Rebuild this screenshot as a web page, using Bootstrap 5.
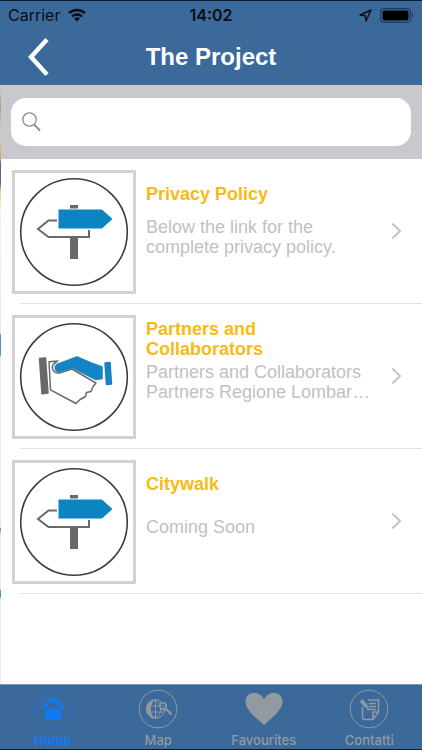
<!DOCTYPE html>
<html lang="en">
<head>
<meta charset="utf-8">
<meta name="viewport" content="width=device-width, initial-scale=1">
<title>The Project</title>
<link href="https://cdn.jsdelivr.net/npm/bootstrap@5.3.0/dist/css/bootstrap.min.css" rel="stylesheet">
<style>
  :root { --bar: #3b6a9a; --gold: #f9ba14; --muted: #c1c1c3; }
  body { font-family: "Liberation Sans", Arial, sans-serif; }
  .app-header { background: var(--bar); border-top: 1px solid #0b1a33; }
  .status-bar { font-family: Inter, sans-serif; font-size: 16px; line-height: 28px; color: #0a0d14; }
  .status-time { font-weight: 600; }
  .title-bar { height: 56px; }
  .page-title { font-size: 24px; line-height: 56px; font-weight: 700; }
  .back-btn { width: 78px; height: 56px; line-height: 0; }
  .app-main {
    background: linear-gradient(#d9d3c4 0, #a99f84 20px, #d9d3c4 50px, #c9a84a 74px, #50688f 78px, #50688f 98px,
      #e6cf8a 106px, #f3f3f3 124px, #e8e8e8 248px, #4b96bd 250px, #4b96bd 270px, #ececec 272px, #ececec 442px,
      #4b96bd 444px, #ececec 450px, #ececec 504px, #4b96bd 506px, #4b96bd 512px, #ececec 514px) 0 0 / 1px 100% no-repeat #fff;
  }
  .search-panel { background: #c9c8cf; padding: 13px 11px 13px 10px; margin-left: 1px; }
  .search-box { height: 48px; border-radius: 15px; padding: 0 11px; }
  .search-box input { font-size: 18px; }
  .entry { height: 145px; padding: 11px 12px 0 12px; color: inherit; }
  .entry::after { content: ""; position: absolute; left: 20px; right: 0; bottom: 0; height: 1px; background: #e3e3e4; }
  .thumb { width: 124px; height: 124px; border: 3px solid #d2d2d2; }
  .entry-text { margin-left: 10px; margin-top: 4px; }
  .entry-title, .entry-desc { height: 40px; font-size: 18px; line-height: 20px; }
  .entry-title { color: var(--gold); font-weight: 700; max-width: 150px; }
  .entry-desc { color: var(--muted); margin-top: 3px; }
  .chevron { margin: 52px 8px 0 16px; }
  .tab-bar { background: var(--bar); border-top: 1px solid #7f9bb8; border-bottom: 1px solid #0b1a33; height: 66px; }
  .tab-item { font-family: Inter, sans-serif; font-size: 13px; line-height: 16px; font-weight: 500; color: #9299a1; padding-top: 4px; }
  .tab-item.current { color: #0a7bff; font-weight: 600; }
  .tab-item svg { margin-bottom: 3px; }
</style>
<script src="https://cdn.jsdelivr.net/npm/bootstrap@5.3.0/dist/js/bootstrap.bundle.min.js" defer></script>
</head>
<body class="d-flex flex-column min-vh-100 bg-white">
<svg class="d-none" aria-hidden="true">
  <symbol id="signpost" viewBox="0 0 118 118">
    <circle cx="59" cy="59" r="53.3" fill="none" stroke="#3c3c3e" stroke-width="1.6"/>
    <path d="M55 32h8v54h-8z" fill="#68696b"/>
    <path d="M74 43v21H33l-10-8 10-9h12z" fill="#fff"/>
    <path d="M42 47.500H33.500L23 56l10.500 8H74V57" fill="none" stroke="#68696b" stroke-width="2"/>
    <path d="M43 36h44l11 10-11 10H43z" fill="#0b84c1" stroke="#fff" stroke-width="1"/>
  </symbol>
  <symbol id="handshake" viewBox="0 0 118 118">
    <circle cx="59" cy="59" r="53.300" fill="none" stroke="#3c3c3e" stroke-width="1.6"/>
    <path d="M24.500 40.500l6-.5 2.500 35-6 .8z" fill="#68696b" stroke="#68696b" stroke-width="1.500" stroke-linejoin="round"/>
    <path d="M43 43l-9 .8 1.500 28L61 85.500l4-4 5.500-3 1-4 4.500-1 2-5 3-3.500-24-14-12.500 4c-8 .5-9.500-8-3-11z" fill="#fff" stroke="#68696b" stroke-width="1.500" stroke-linejoin="round"/>
    <path d="M42 46.500l20-7.500 14 6 11 4v11.500l-6 1L57.500 49.500 44 53.500c-4 .5-5-5-2-7z" fill="#1683c4" stroke="#1683c4" stroke-width="1.500" stroke-linejoin="round"/>
    <path d="M90 45l5-.5 1.500 21.500-5 .5z" fill="#1683c4" stroke="#1683c4" stroke-width="1.500" stroke-linejoin="round"/>
  </symbol>
  <symbol id="next" viewBox="0 0 11 18"><path d="M1.300 1.500L9 9l-7.700 7.500" fill="none" stroke="#c4c4c8" stroke-width="2"/></symbol>
</svg>

<header class="app-header">
  <div class="status-bar row g-0 px-2">
    <div class="col d-flex align-items-center">
      <span>Carrier</span>
      <svg class="ms-2" width="18" height="14" viewBox="0 0 18 14" aria-label="Wi-Fi"><g fill="none" stroke="#0a0d14" stroke-width="2.400"><path d="M1 5.200a11.500 11.500 0 0 1 16 0"/><path d="M4 8.500a7.200 7.200 0 0 1 10 0"/></g><path d="M9 13.500l-3-3a4.200 4.200 0 0 1 6 0z" fill="#0a0d14"/></svg>
    </div>
    <div class="col-auto status-time">14:02</div>
    <div class="col d-flex align-items-center justify-content-end">
      <svg class="me-2" width="13" height="13" viewBox="0 0 13 13" aria-label="Location"><path d="M12 1L1 6l5.300.7L7 12z" fill="none" stroke="#0a0d14" stroke-width="1.400" stroke-linejoin="round"/></svg>
      <svg width="34" height="15" viewBox="0 0 34 15" aria-label="Battery"><rect x=".6" y=".6" width="29.800" height="13.800" rx="3.500" fill="none" stroke="#1f3c60" stroke-width="1.200"/><rect x="2.500" y="2.500" width="26" height="10" rx="1.800" fill="#000"/><path d="M31.800 5v5c2-.8 2-4.200 0-5z" fill="#1f3c60"/></svg>
    </div>
  </div>
  <div class="title-bar row g-0 text-white">
    <div class="col"><button type="button" class="back-btn btn p-0 border-0" aria-label="Back"><svg width="22" height="38" viewBox="0 0 22 38"><path d="M19 1.500L3 19l16 17.500" fill="none" stroke="#fff" stroke-width="4.400"/></svg></button></div>
    <h1 class="page-title col-auto m-0">The Project</h1>
    <div class="col"></div>
  </div>
</header>

<main class="app-main flex-grow-1">
  <form class="search-panel" role="search">
    <div class="search-box bg-white d-flex align-items-center">
      <label for="q" class="lh-1"><svg width="19" height="20" viewBox="0 0 19 20" role="img" aria-label="Search"><g fill="none" stroke="#8b8b90"><circle cx="7.500" cy="7.500" r="6.700" stroke-width="1.300"/><path d="M12.200 12.600l5.800 6" stroke-width="2"/></g></svg></label>
      <input id="q" type="search" class="form-control border-0 shadow-none bg-transparent">
    </div>
  </form>
  <nav aria-label="Project pages">
    <a href="#privacy" class="entry d-flex align-items-start position-relative text-decoration-none">
      <span class="thumb flex-shrink-0 d-block bg-white"><svg class="d-block" width="118" height="118" aria-hidden="true"><use href="#signpost"/></svg></span>
      <span class="entry-text flex-grow-1 overflow-hidden">
        <span class="entry-title d-flex align-items-center">Privacy Policy</span>
        <span class="entry-desc d-flex flex-column justify-content-center"><span>Below the link for the</span><span>complete privacy policy.</span></span>
      </span>
      <svg class="chevron flex-shrink-0" width="11" height="18" aria-hidden="true"><use href="#next"/></svg>
    </a>
    <a href="#partners" class="entry d-flex align-items-start position-relative text-decoration-none">
      <span class="thumb flex-shrink-0 d-block bg-white"><svg class="d-block" width="118" height="118" aria-hidden="true"><use href="#handshake"/></svg></span>
      <span class="entry-text flex-grow-1 overflow-hidden">
        <span class="entry-title d-flex align-items-center">Partners and Collaborators</span>
        <span class="entry-desc d-flex flex-column justify-content-center"><span>Partners and Collaborators</span><span class="text-truncate">Partners Regione Lombardia</span></span>
      </span>
      <svg class="chevron flex-shrink-0" width="11" height="18" aria-hidden="true"><use href="#next"/></svg>
    </a>
    <a href="#citywalk" class="entry d-flex align-items-start position-relative text-decoration-none">
      <span class="thumb flex-shrink-0 d-block bg-white"><svg class="d-block" width="118" height="118" aria-hidden="true"><use href="#signpost"/></svg></span>
      <span class="entry-text flex-grow-1 overflow-hidden">
        <span class="entry-title d-flex align-items-center">Citywalk</span>
        <span class="entry-desc d-flex flex-column justify-content-center"><span>Coming Soon</span></span>
      </span>
      <svg class="chevron flex-shrink-0" width="11" height="18" aria-hidden="true"><use href="#next"/></svg>
    </a>
  </nav>
</main>

<nav class="tab-bar row g-0 text-center sticky-bottom" aria-label="Sections">
  <a href="#home" class="tab-item current col text-decoration-none d-flex flex-column align-items-center" aria-current="page">
    <svg width="40" height="40" viewBox="0 0 40 40"><circle cx="20" cy="20" r="18.800" fill="none" stroke="#1470d8"/><path d="M10 19.500l3.500-5L20 9.500l6.500 5 3.500 5" fill="none" stroke="#0a7bff" stroke-width="3"/><path d="M12 20.500h3l5-3 5 3h3V31H12z" fill="#0a7bff"/><path d="M13 24h14M13 28h14M17 21v3M23 21v3M20 24v4M16 28v3M24 28v3" stroke="#2670c4" stroke-width=".7"/></svg>Home</a>
  <a href="#map" class="tab-item col text-decoration-none d-flex flex-column align-items-center">
    <svg width="40" height="40" viewBox="0 0 40 40" fill="none" stroke="#9299a1"><circle cx="20" cy="20" r="18.800"/><circle cx="17.500" cy="20" r="9.300"/><path d="M17.500 10.700v18.600M8.500 17h17M8.500 23h17M17.500 10.700c-7 4-7 14.600 0 18.600M17.500 10.700c7 4 7 14.600 0 18.600"/><path d="M15 11c-8 3-8 15 0 18-4-5-4-13 0-18z" fill="#9299a1"/><circle cx="25" cy="17" r="3.200" fill="#3b6a9a" stroke-width="1.600"/><circle cx="25" cy="17" r=".6"/><path d="M28 20l5.500 5.500" stroke-width="2.400"/></svg>Map</a>
  <a href="#favourites" class="tab-item col text-decoration-none d-flex flex-column align-items-center">
    <svg width="40" height="40" viewBox="0 0 40 40"><path d="M20 36.500C17 32 1.500 23 1.500 12.500 1.500 6.500 5.500 4 10 4s8 2.500 10 6c2-3.500 5.500-6 10-6s8.500 2.500 8.500 8.500C38.500 23 23 32 20 36.500z" fill="#9299a1"/></svg>Favourites</a>
  <a href="#contatti" class="tab-item col text-decoration-none d-flex flex-column align-items-center">
    <svg width="40" height="40" viewBox="0 0 40 40" fill="none" stroke="#9299a1" stroke-width="1.500"><circle cx="20" cy="20" r="18.800" stroke-width="1"/><path d="M19 11h10.500v12L24 30.500H15.500a2 2 0 0 1-2-2V18M29.500 23H24v7.500M20 14.500h7M20 17.500h7M18 20.500h9" stroke-linejoin="round"/><path d="M12 11.500l5.500 6" stroke-width="3.600"/><path d="M17 17l2.500 2.500"/></svg>Contatti</a>
</nav>
</body>
</html>
